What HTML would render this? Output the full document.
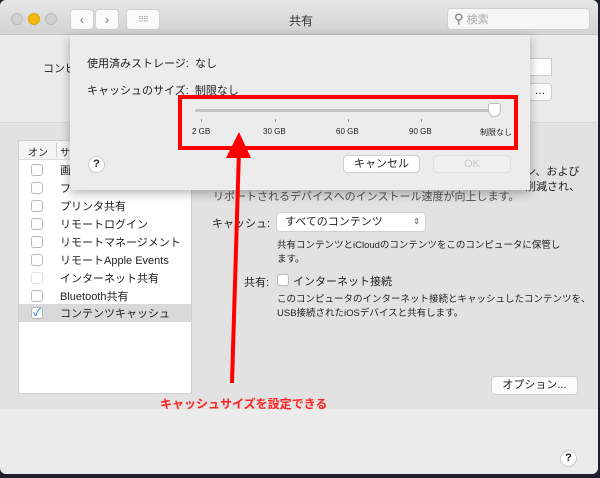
<!DOCTYPE html>
<html><head><meta charset="utf-8"><style>
*{margin:0;padding:0;box-sizing:border-box}
body{width:600px;height:478px;background:#1d1f2c;position:relative;overflow:hidden;font-family:"Liberation Sans","Noto Sans CJK JP",sans-serif;font-size:11px;color:#222}
.a{position:absolute;white-space:nowrap}
#win{position:absolute;left:0;top:0;width:598px;height:474px;background:#ebebeb;border-radius:6px;overflow:hidden}
#tb{position:absolute;left:0;top:0;width:598px;height:35px;background:linear-gradient(#e6e6e6,#d3d3d3);border-bottom:1px solid #c4c4c4}
.dot{position:absolute;top:13px;width:12px;height:12px;border-radius:50%;background:#d0d0d0;border:1px solid #bcbcbc}
.btn{position:absolute;background:#fbfbfb;border:1px solid #d0d0d0;border-radius:4px;text-align:center}
.cb{position:absolute;width:12px;height:12px;background:#fff;border:1px solid #b8b8b8;border-radius:3px}
.row{position:absolute;left:60px}
</style></head><body>
<div id="win">
<div id="tb">
 <div class="dot" style="left:11px"></div>
 <div class="dot" style="left:28px;background:#f5b90f;border-color:#dea200"></div>
 <div class="dot" style="left:45px"></div>
 <div class="btn" style="left:70px;top:9px;width:24px;height:21px;color:#888;font-size:14px;line-height:18px">‹</div>
 <div class="btn" style="left:95px;top:9px;width:24px;height:21px;color:#888;font-size:14px;line-height:18px">›</div>
 <div class="btn" style="left:126px;top:9px;width:34px;height:21px;color:#999;font-size:8px;line-height:20px;letter-spacing:-1px">⠿⠿</div>
 <div class="a" style="left:289px;top:12px;font-size:12px;color:#333">共有</div>
 <div class="btn" style="left:447px;top:8px;width:143px;height:22px;background:#f6f6f6;text-align:left;padding-left:6px;color:#aaa;line-height:20px"><span style="color:#777;font-size:13px">⚲</span> 検索</div>
</div>
<div class="a" style="left:43px;top:60px">コンピ</div>
<div class="a" style="left:528px;top:58px;width:24px;height:18px;background:#fff;border:1px solid #ccc"></div>
<div class="btn" style="left:528px;top:83px;width:24px;height:18px;line-height:14px">…</div>
<div class="a" style="left:0;top:122px;width:598px;height:287px;background:#e2e2e2;border-top:1px solid #d6d6d6"></div>
<div class="a" style="left:18px;top:140px;width:174px;height:254px;background:#fff;border:1px solid #cfcfcf"></div>
<div class="a" style="left:19px;top:141px;width:172px;height:19px;background:#f4f4f4;border-bottom:1px solid #ddd"></div>
<div class="a" style="left:28px;top:144px;font-size:10px">オン</div>
<div class="a" style="left:56px;top:143px;width:1px;height:14px;background:#ccc"></div>
<div class="a" style="left:60px;top:144px;font-size:10px">サ</div>
<div class="a" style="left:19px;top:304px;width:172px;height:18px;background:#d9d9d9"></div>
<div class="cb" style="left:31px;top:164px"></div><div class="a row" style="top:162px">画</div>
<div class="cb" style="left:31px;top:182px"></div><div class="a row" style="top:180px">フ</div>
<div class="cb" style="left:31px;top:200px"></div><div class="a row" style="top:198px">プリンタ共有</div>
<div class="cb" style="left:31px;top:218px"></div><div class="a row" style="top:216px">リモートログイン</div>
<div class="cb" style="left:31px;top:236px"></div><div class="a row" style="top:234px">リモートマネージメント</div>
<div class="cb" style="left:31px;top:254px"></div><div class="a row" style="top:252px">リモートApple Events</div>
<div class="cb" style="left:31px;top:272px;border-color:#e0e0e0"></div><div class="a row" style="top:270px">インターネット共有</div>
<div class="cb" style="left:31px;top:290px"></div><div class="a row" style="top:288px">Bluetooth共有</div>
<div class="cb" style="left:31px;top:307px;background:#fff;color:#1a6fe8;font-size:11px;line-height:10px;text-align:center">✓</div><div class="a row" style="top:305px">コンテンツキャッシュ</div>
<div class="a" style="left:525px;top:163px">ン、および</div>
<div class="a" style="left:525px;top:178px">削減され、</div>
<div class="a" style="left:213px;top:188px;color:#555">リポートされるデバイスへのインストール速度が向上します。</div>
<div class="a" style="left:212px;top:215px">キャッシュ:</div>
<div class="btn" style="left:276px;top:212px;width:150px;height:20px;background:#fff;text-align:left;padding-left:8px;line-height:18px">すべてのコンテンツ<span style="position:absolute;right:5px;font-size:8px;color:#555">⇕</span></div>
<div class="a" style="left:277px;top:237px;font-size:9.5px">共有コンテンツとiCloudのコンテンツをこのコンピュータに保管し</div>
<div class="a" style="left:277px;top:251px;font-size:9.5px">ます。</div>
<div class="a" style="left:244px;top:274px">共有:</div>
<div class="cb" style="left:277px;top:274px"></div>
<div class="a" style="left:293px;top:273px">インターネット接続</div>
<div class="a" style="left:277px;top:291px;font-size:9.5px">このコンピュータのインターネット接続とキャッシュしたコンテンツを、</div>
<div class="a" style="left:277px;top:305px;font-size:9.5px">USB接続されたiOSデバイスと共有します。</div>
<div class="btn" style="left:491px;top:376px;width:87px;height:19px;line-height:17px">オプション...</div>
<div class="a" style="left:560px;top:450px;width:17px;height:17px;border-radius:50%;background:#fff;border:1px solid #ccc;text-align:center;line-height:15px;font-weight:bold">?</div>
<div class="a" style="left:70px;top:35px;width:460px;height:155px;background:#ececec;box-shadow:0 3px 10px rgba(0,0,0,.3)">
 <div class="a" style="left:17px;top:20px">使用済みストレージ:&nbsp; なし</div>
 <div class="a" style="left:17px;top:47px">キャッシュのサイズ:&nbsp; 制限なし</div>
 <div class="a" style="left:125px;top:74px;width:305px;height:3px;background:#c4c4c4;border-radius:2px"></div>
 <div class="a" style="left:131px;top:84px;width:1px;height:3px;background:#999"></div>
 <div class="a" style="left:205px;top:84px;width:1px;height:3px;background:#999"></div>
 <div class="a" style="left:278px;top:84px;width:1px;height:3px;background:#999"></div>
 <div class="a" style="left:351px;top:84px;width:1px;height:3px;background:#999"></div>
 <div class="a" style="left:418px;top:68px;width:13px;height:14px;background:#fff;border:1px solid #bbb;border-radius:3px 3px 50% 50%"></div>
 <div class="a" style="left:122px;top:92px;font-size:8px">2 GB</div>
 <div class="a" style="left:193px;top:92px;font-size:8px">30 GB</div>
 <div class="a" style="left:266px;top:92px;font-size:8px">60 GB</div>
 <div class="a" style="left:339px;top:92px;font-size:8px">90 GB</div>
 <div class="a" style="left:410px;top:92px;font-size:8px">制限なし</div>
 <div class="a" style="left:18px;top:121px;width:17px;height:17px;border-radius:50%;background:#fff;border:1px solid #ccc;text-align:center;line-height:15px;font-weight:bold">?</div>
 <div class="btn" style="left:273px;top:120px;width:77px;height:18px;line-height:16px;background:#fff">キャンセル</div>
 <div class="btn" style="left:363px;top:120px;width:78px;height:18px;line-height:16px;background:#efefef;color:#c8c8c8;border-color:#e0e0e0">OK</div>
</div>
<div class="a" style="left:178px;top:95px;width:340px;height:55px;border:4px solid #f00"></div>
<svg class="a" style="left:0;top:0" width="600" height="478"><line x1="239" y1="150" x2="232" y2="383" stroke="#f00" stroke-width="4"/><polygon points="239,132 226,158 251,158" fill="#f00"/></svg>
<div class="a" style="left:160px;top:395px;color:#f22;font-weight:bold;font-size:12px">キャッシュサイズを設定できる</div>
</div>
</body></html>
